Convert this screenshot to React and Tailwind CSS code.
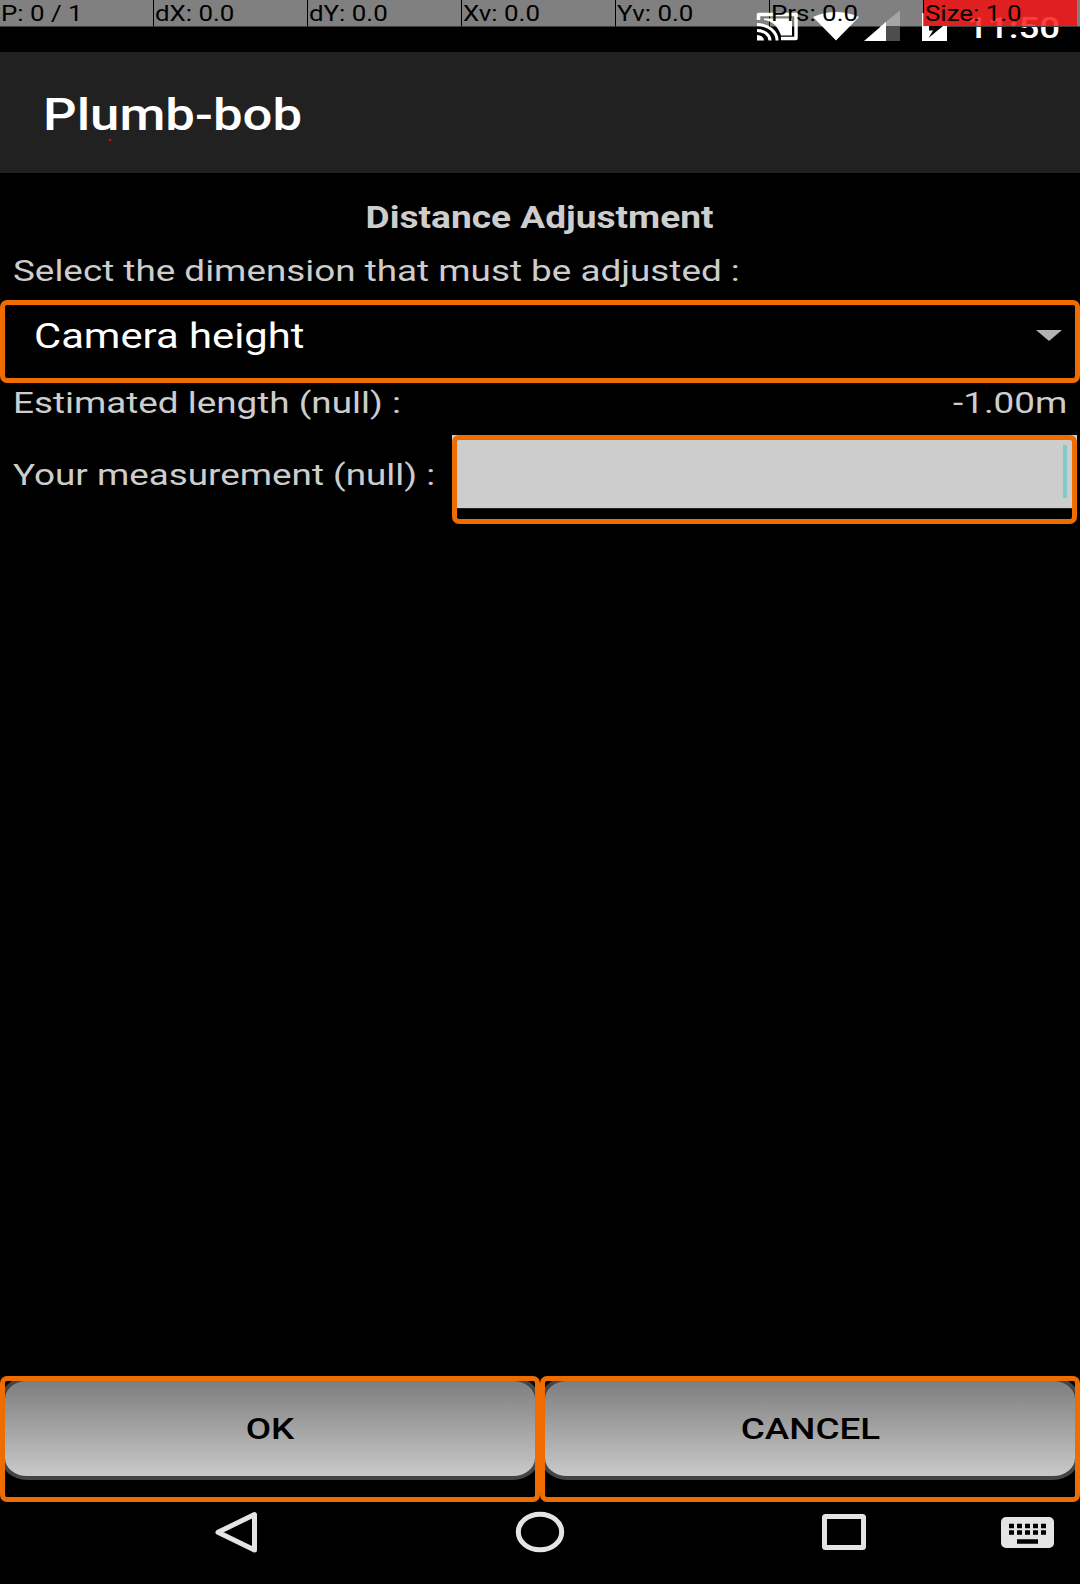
import React from "react";

function Label({ children, className = "", origin = "origin-left", stretch = "scale-x-[1.212]" }) {
  return (
    <span className={`inline-block whitespace-nowrap ${stretch} ${origin} ${className}`}>{children}</span>
  );
}

const pointerCells = ["P: 0 / 1", "dX: 0.0", "dY: 0.0", "Xv: 0.0", "Yv: 0.0", "Prs: 0.0", "Size: 1.0"];

function PointerBar() {
  return (
    <div className="absolute inset-x-0 top-0 flex h-[27px]">
      {pointerCells.map((text, i) => (
        <div
          key={text}
          className={`h-[27px] shrink-0 border-b border-b-[#404040] pl-[1px] text-[22.300px] leading-[27px] text-black ${
            i === 6
              ? "w-[154px] border-l border-l-black bg-[rgba(255,36,36,0.88)]"
              : i === 0
                ? "w-[153px] bg-[#808080]"
                : "w-[154px] border-l border-l-black bg-[#808080]"
          }`}
        >
          <Label stretch="scale-x-[1.160]" className="relative z-10">{text}</Label>
        </div>
      ))}
      <div className="h-[27px] grow border-b border-[#404040] bg-[#808080]" />
    </div>
  );
}

function StatusIcons() {
  return (
    <svg className="absolute left-[745px] top-0 z-[1]" width="210" height="52" viewBox="745 0 210 52">
      <path d="M758.500 20V14.500H796V38.500H781" fill="none" stroke="#fff" strokeWidth="3.500" strokeLinejoin="round" />
      <path d="M764 18.500H792V35.500H781C778 26 772 21 764 20Z" fill="#fff" />
      <path d="M757 24.500A20 16 0 0 1 777 40.500M757 30.500A13 10 0 0 1 770 40.500" fill="none" stroke="#fff" strokeWidth="3" />
      <path d="M757 35A7 5.500 0 0 1 764 40.500H757Z" fill="#fff" />
      <path d="M813 17Q836 7 859 17L836 40.500Z" fill="#fff" />
      <path d="M900 10.500V27H879.500Z" fill="#a6a6a6" />
      <path d="M886 26H900V41H886Z" fill="#4d4d4d" />
      <path d="M864 41L886 22V41Z" fill="#fff" />
      <path d="M922 13H923.500V26H947V41H922Z" fill="#fff" />
      <path d="M929 26H943L928.500 38L933 30.500H929Z" fill="#000" />
    </svg>
  );
}

function ActionButton({ children }) {
  return (
    <button className="h-[126px] w-[540px] rounded-[7px] border-[5px] border-[#ef6c00]">
      <div className="h-full overflow-hidden">
        <div className="-mx-[4px] -mt-[4px] h-[103px] rounded-[26px/22px] border-4 border-[#444] bg-linear-to-b from-[#7b7b7b] to-[#cdcdcd] bg-origin-border">
          <div className="flex h-full items-center justify-center text-[30.400px] font-medium text-black">
            <Label origin="origin-center">{children}</Label>
          </div>
        </div>
      </div>
    </button>
  );
}

export default function App() {
  return (
    <div className="relative flex h-[1584px] w-[1080px] flex-col overflow-hidden bg-black font-['Roboto',sans-serif] text-[#cdcdcd]">
      <div className="relative h-[52px] shrink-0">
        <div className="absolute left-[967px] top-[9px] text-[30.300px] font-medium leading-[38px] text-white">
          <Label>11:50</Label>
        </div>
        <PointerBar />
        <StatusIcons />
      </div>
      <header className="flex h-[121px] shrink-0 items-center bg-[#212121] pl-[43px] pt-[7px] text-[43.500px] font-medium text-white">
        <Label>Plumb-bob</Label>
        <i className="absolute left-[109px] top-[139px] h-[2px] w-[2px] bg-[#f00]" />
      </header>
      <main className="flex grow flex-col">
        <h1 className="mt-[25px] h-[40px] text-center text-[30.600px] font-bold leading-[40px]">
          <Label origin="origin-center">Distance Adjustment</Label>
        </h1>
        <p className="mt-[13px] h-[40px] pl-[13px] text-[30.400px] leading-[40px]">
          <Label>Select the dimension that must be adjusted :</Label>
        </p>
        <div className="mt-[9px] flex h-[83px] items-start justify-between rounded-[7px] border-[5px] border-[#ef6c00] pl-[29px] pr-[13px] text-[34.650px] text-white">
          <Label stretch="scale-x-[1.205]" className="mt-[11px] leading-[40px]">Camera height</Label>
          <svg className="mt-[25px]" width="26" height="11" viewBox="0 0 26 11">
            <path d="M0 0H26L13 11Z" fill="#b3b3b3" />
          </svg>
        </div>
        <div className="flex h-[52px] justify-between pl-[13px] pr-[13px] text-[30.400px] leading-[40px]">
          <Label>Estimated length (null) :</Label>
          <Label origin="origin-right">-1.00m</Label>
        </div>
        <div className="flex h-[89px] justify-between pl-[13px] pr-[3px] text-[30.400px]">
          <Label className="mt-[20px] leading-[40px]">Your measurement (null) :</Label>
          <div className="h-[74px] w-[625px] border-b border-[#222] bg-[#cdcdcd]">
            <div className="flex h-[89px] justify-end rounded-[7px] border-[5px] border-[#ef6c00] pr-[5px] pt-[5px]">
              <div className="h-[53px] w-[4px] bg-[#80cbc4]" />
            </div>
          </div>
        </div>
      </main>
      <div className="flex shrink-0">
        <ActionButton>OK</ActionButton>
        <ActionButton>CANCEL</ActionButton>
      </div>
      <nav className="h-[82px] shrink-0">
        <svg width="1080" height="82" viewBox="0 1502 1080 82" fill="none" stroke="#e4e4e4">
          <path d="M254.500 1514.500V1550L218 1532.300Z" strokeWidth="5" strokeLinejoin="round" />
          <ellipse cx="540" cy="1532" rx="21.700" ry="17.800" strokeWidth="5" />
          <rect x="824.500" y="1516.500" width="39" height="31" rx="1" strokeWidth="5" />
          <rect x="1001" y="1517" width="53" height="31" rx="5" fill="#e4e4e4" stroke="none" />
          <path d="M1009 1526H1046M1009 1532.500H1046" stroke="#000" strokeWidth="4.500" strokeDasharray="5 3" />
          <path d="M1017 1541.500H1038" stroke="#000" strokeWidth="4.500" />
        </svg>
      </nav>
    </div>
  );
}
